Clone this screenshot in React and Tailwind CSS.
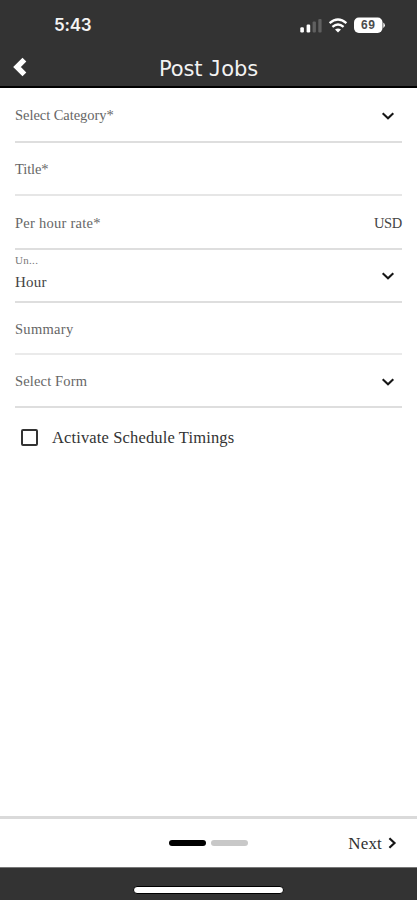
import React from "react";

function Chevron({ className = "" }) {
  return (
    <svg className={className} width="14" height="10" viewBox="0 0 14 10" fill="none" stroke="#161616" strokeWidth="2.1">
      <path d="M1.7 2.3 L7 7.2 L12.3 2.3" />
    </svg>
  );
}

function Field({ label, spacing, height, line = "border-[#dedede]", children }) {
  return (
    <div className={`flex items-center justify-between border-b-2 pt-[3px] text-[14.5px] text-[#666666] ${line} ${height}`}>
      <span className={spacing}>{label}</span>
      {children}
    </div>
  );
}

function StatusBar() {
  return (
    <div className="flex h-[49px] items-center justify-between pl-[54px] pr-[31px] pt-px">
      <span className="pt-px font-['Inter',sans-serif] text-[17px] font-semibold leading-none tracking-[-0.2px] text-[#f4f4f4]">5:43</span>
      <svg width="87" height="20" viewBox="0 0 87 20">
        <g fill="#fff">
          <rect x="1.3" y="12.2" width="3.6" height="5.3" rx="1.2" />
          <rect x="7.6" y="9.6" width="3.6" height="7.9" rx="1.2" />
          <rect x="13.6" y="6.6" width="3.3" height="10.9" rx="1" fill="#606060" />
          <rect x="19.3" y="4" width="3.3" height="13.5" rx="1" fill="#606060" />
          <path d="M39 17.5 L36 14.5 Q39 12.3 42 14.5 Z" />
          <rect x="55" y="2.5" width="28.5" height="15.4" rx="4.8" />
          <path d="M84.3 7.5 Q87.5 10.2 84.3 13 Z" />
        </g>
        <g fill="none" stroke="#fff" strokeWidth="2.3">
          <path d="M30.6 8.2 Q39 0.8 47.4 8.2" />
          <path d="M33.4 11.9 Q39 7 44.6 11.9" />
        </g>
        <text x="69.2" y="14.3" textAnchor="middle" fontFamily="Liberation Sans, sans-serif" fontWeight="700" fontSize="12" letterSpacing="0.5" fill="#4c4c4c">69</text>
      </svg>
    </div>
  );
}

export default function App() {
  return (
    <div className="flex h-[900px] w-[417px] flex-col overflow-hidden bg-white font-['Liberation_Serif',serif]">
      <header className="h-[88px] shrink-0 border-b-2 border-black bg-[#333333]">
        <StatusBar />
        <div className="grid h-[37px] grid-cols-[40px_1fr_40px] items-center">
          <svg width="16" height="20" viewBox="0 0 16 20" className="mb-px ml-3" fill="none" stroke="#fff" strokeWidth="5.4">
            <path d="M12.4 2.6 L5 10 L12.4 17.4" />
          </svg>
          <h1 className="whitespace-nowrap pt-[3px] text-center font-['DejaVu_Sans',sans-serif] text-[21px] leading-none tracking-[-0.15px] text-[#f2f2f2]">
            Post <span className="font-['DejaVu_Sans_Mono',monospace]">J</span>obs
          </h1>
        </div>
      </header>

      <main className="flex-1 px-[15px]">
        <Field label="Select Category*" spacing="tracking-[-0.05px]" height="h-[55px]">
          <Chevron className="mr-[7px]" />
        </Field>
        <Field label="Title*" spacing="tracking-[-0.1px]" height="h-[53px]" line="border-[#e6e6e6]" />
        <Field label="Per hour rate*" spacing="tracking-[0.25px]" height="h-[54px]">
          <span className="tracking-[-0.3px] text-[#444444]">USD</span>
        </Field>
        <div className="flex h-[53px] items-center justify-between border-b-2 border-[#dedede]">
          <div className="flex h-full flex-col">
            <span className="mt-[3px] text-[11px] leading-[14px] tracking-[0.3px] text-[#777777]">Un...</span>
            <span className="mt-[6px] text-[15px] leading-[18px] tracking-[0.25px] text-[#444444]">Hour</span>
          </div>
          <Chevron className="mr-[7px]" />
        </div>
        <Field label="Summary" spacing="tracking-[0.3px]" height="h-[52px]" line="border-[#eaeaea]" />
        <Field label="Select Form" spacing="tracking-[0.15px]" height="h-[53px]">
          <Chevron className="mr-[7px]" />
        </Field>
        <label className="flex h-[58px] items-center pl-[6px] text-[16.5px] text-[#333333]">
          <span className="mr-[14px] h-[17px] w-[17px] rounded-[2px] border-2 border-[#333333]" />
          <span className="pt-[2px] tracking-[0.14px]">Activate Schedule Timings</span>
        </label>
      </main>

      <footer className="shrink-0">
        <div className="grid h-[51px] grid-cols-[1fr_79px_1fr] items-center border-t-[3px] border-[#dadada]">
          <span />
          <div className="flex gap-[5px]">
            <span className="h-[6px] w-[37px] rounded-full bg-black" />
            <span className="h-[6px] w-[37px] rounded-full bg-[#c8c8c8]" />
          </div>
          <button className="flex items-center justify-end pr-5 text-[17px] text-[#303030]">
            <span className="pt-px tracking-[0.15px]">Next</span>
            <svg width="9" height="12" viewBox="0 0 9 12" className="ml-[6px]" fill="none" stroke="#161616" strokeWidth="2.2">
              <path d="M1.4 1.2 L6.5 6 L1.4 10.8" />
            </svg>
          </button>
        </div>
        <div className="flex h-[33px] justify-center border-t border-[#777777] bg-[#333333] pt-[18px]">
          <span className="h-[8px] w-[151px] rounded-full border border-black bg-white" />
        </div>
      </footer>
    </div>
  );
}
